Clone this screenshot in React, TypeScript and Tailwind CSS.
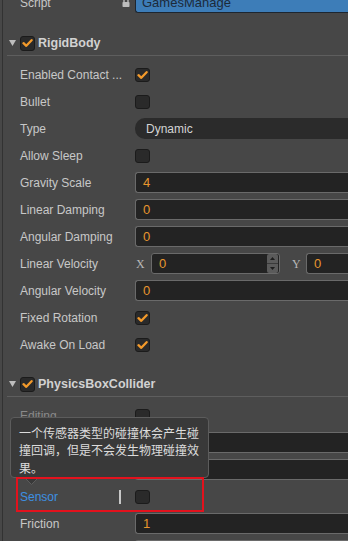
import React from 'react';

const font = { fontFamily: '"Liberation Sans", Arial, "Noto Sans CJK SC", sans-serif' };

const Check = () => (
  <svg width="11" height="10" viewBox="0 0 11 10">
    <path d="M1.5 5.2 L4.3 7.8 L9.6 2.2" fill="none" stroke="#f39a2b" strokeWidth="2.3" strokeLinecap="round" strokeLinejoin="round" />
  </svg>
);

const Checkbox = ({ on = false }: { on?: boolean }) => (
  <div className="w-[15px] h-[14px] rounded-[3px] bg-[#2a2a2a] border border-[#1b1b1b] flex items-center justify-center">
    {on && <Check />}
  </div>
);

const Field = ({ value }: { value: string }) => (
  <div className="flex-1 h-[21px] rounded-l-[3px] bg-[#232323] border border-[#6a6a6a] border-r-0 pl-[7px] flex items-center text-[13px] text-[#e8962e]">
    {value}
  </div>
);

const Row = ({ label, children, labelClass = 'text-[#c8c8c8]' }: { label: string; children?: React.ReactNode; labelClass?: string }) => (
  <div className="h-[27px] shrink-0 flex items-center pl-[17px]">
    <div className={`w-[115px] text-[12px] whitespace-nowrap ${labelClass}`}>{label}</div>
    <div className="flex-1 flex items-center">{children}</div>
  </div>
);

const Header = ({ title, className }: { title: string; className: string }) => (
  <div className={`ml-[4px] h-[25px] shrink-0 border-b border-[#5e5e5e] flex items-center pl-[2px] ${className}`}>
    <div className="w-[11px] flex items-center">
      <svg width="7" height="6" viewBox="0 0 7 6">
        <polygon points="0,0 7,0 3.5,6" fill="#bdbdbd" />
      </svg>
    </div>
    <div className="w-[15px] h-[15px] rounded-[3px] bg-[#2a2a2a] border border-[#1b1b1b] flex items-center justify-center">
      <Check />
    </div>
    <div className="ml-[3px] text-[12.5px] font-bold text-[#d2d2d2]">{title}</div>
  </div>
);

const Spinner = () => (
  <div className="w-[11px] h-[19px] mr-[1px] flex flex-col bg-[#5b5b5b] rounded-[2px]">
    <div className="flex-1 flex items-center justify-center border-b border-[#3a3a3a]">
      <svg width="5" height="3" viewBox="0 0 5 3"><polygon points="0,3 5,3 2.5,0" fill="#1e1e1e" /></svg>
    </div>
    <div className="flex-1 flex items-center justify-center">
      <svg width="5" height="3" viewBox="0 0 5 3"><polygon points="0,0 5,0 2.5,3" fill="#1e1e1e" /></svg>
    </div>
  </div>
);

export default function App() {
  return (
    <div className="relative w-[348px] h-[541px] overflow-hidden bg-[#474747] pl-[2px]" style={font}>
      <div className="h-full border-l border-[#323232] flex flex-col">
        {/* script row */}
        <div className="mt-[-8px] h-[21px] shrink-0 flex items-center pl-[17px]">
          <div className="w-[102px] text-[12px] text-[#c8c8c8]">Script</div>
          <div className="w-[13px] flex items-center">
            <svg width="8" height="9" viewBox="0 0 8 9">
              <path d="M2 4 V2.5 A2 2 0 0 1 6 2.5 V4" fill="none" stroke="#bdbdbd" strokeWidth="1.4" />
              <rect x="0.5" y="4" width="7" height="5" rx="0.8" fill="#bdbdbd" />
            </svg>
          </div>
          <div className="flex-1 h-[21px] bg-[#3d7db8] border border-[#1d2630] border-r-0 rounded-l-[3px] pl-[6px] flex items-center text-[13px] text-[#1c2a3a]">
            GamesManage
          </div>
        </div>

        <Header title="RigidBody" className="mt-[18px]" />
        <div className="mt-[5px] shrink-0">
          <Row label="Enabled Contact ..."><Checkbox on /></Row>
          <Row label="Bullet"><Checkbox /></Row>
          <Row label="Type">
            <div className="flex-1 h-[21px] rounded-l-[10px] bg-[#2b2b2b] pl-[11px] flex items-center text-[12px] text-[#d4d4d4]">Dynamic</div>
          </Row>
          <Row label="Allow Sleep"><Checkbox /></Row>
          <Row label="Gravity Scale"><Field value="4" /></Row>
          <Row label="Linear Damping"><Field value="0" /></Row>
          <Row label="Angular Damping"><Field value="0" /></Row>
          <Row label="Linear Velocity">
            <span className="w-[16px] pl-[1px] text-[12px] text-[#b8b8b8]" style={{ fontFamily: '"Liberation Serif", serif' }}>X</span>
            <div className="w-[129px] h-[21px] rounded-[3px] bg-[#232323] border border-[#6a6a6a] pl-[7px] flex items-center justify-between text-[13px] text-[#e8962e]">
              <span>0</span>
              <Spinner />
            </div>
            <span className="w-[26px] pl-[12px] text-[12px] text-[#b8b8b8]" style={{ fontFamily: '"Liberation Serif", serif' }}>Y</span>
            <Field value="0" />
          </Row>
          <Row label="Angular Velocity"><Field value="0" /></Row>
          <Row label="Fixed Rotation"><Checkbox on /></Row>
          <Row label="Awake On Load"><Checkbox on /></Row>
        </div>

        <Header title="PhysicsBoxCollider" className="mt-[14px]" />
        <div className="mt-[5px] shrink-0">
          <Row label="Editing" labelClass="text-[#8a8a8a]"><Checkbox /></Row>
          <Row label="Tag"><Field value="0" /></Row>
          <Row label="Density"><Field value="1" /></Row>
          <Row label="Sensor" labelClass="text-[#3d90e3]">
            <div className="w-[2px] h-[14px] bg-[#c8c8c8] ml-[-16px] mr-[14px]" />
            <Checkbox />
          </Row>
          <Row label="Friction"><Field value="1" /></Row>
          <Row label="Restitution"><Field value="0" /></Row>
        </div>
      </div>

      {/* tooltip */}
      <div className="absolute left-[10px] top-[417px] w-[199px] h-[61px] rounded-[4px] bg-[#393939] border border-[#5c5c5c] pl-[8px] pt-[6px] text-[12px] leading-[17.4px] text-[#dcdcdc]" style={{ fontFamily: '"Noto Sans CJK SC", sans-serif' }}>
        一个传感器类型的碰撞体会产生碰<br />撞回调，但是不会发生物理碰撞效<br />果。
      </div>
      <svg className="absolute left-[24px] top-[477px]" width="15" height="8" viewBox="0 0 15 8">
        <polygon points="0.5,0.5 14.5,0.5 7.5,7.5" fill="#393939" stroke="#5c5c5c" strokeWidth="1" />
        <rect x="1" y="0" width="13" height="1" fill="#393939" />
      </svg>
      <div className="absolute left-[16px] top-[477px] w-[188px] h-[35px] border-2 border-[#e3121d]" />
    </div>
  );
}
